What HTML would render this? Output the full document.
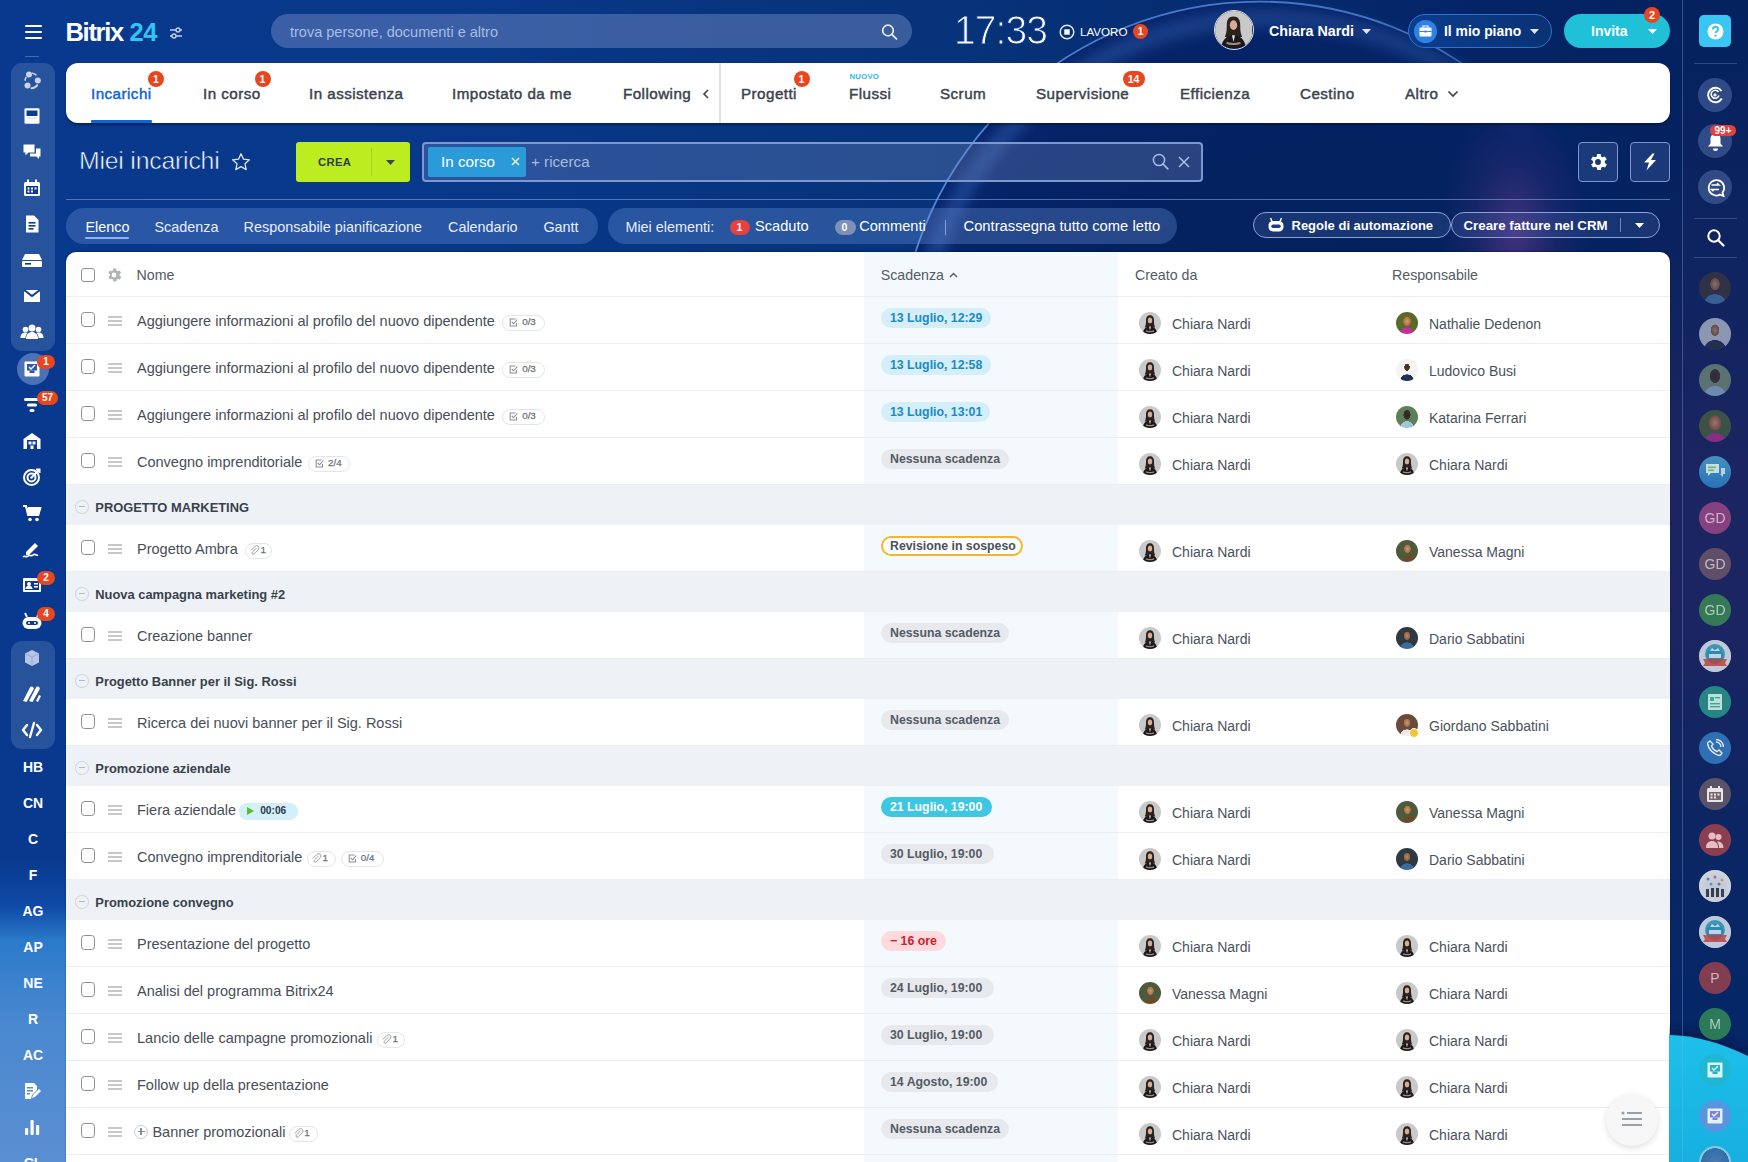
<!DOCTYPE html>
<html><head><meta charset="utf-8">
<style>
*{box-sizing:border-box;margin:0;padding:0}
html,body{width:1748px;height:1162px;overflow:hidden}
body{font-family:"Liberation Sans",sans-serif;position:relative;background:#08388a;color:#3f4650}
.a{position:absolute}
.t{position:absolute;white-space:nowrap;line-height:1}
svg{display:block}
/* background */
#bg{left:0;top:0;width:1748px;height:1162px;overflow:hidden;
 background:linear-gradient(90deg,#08398c 0%,#08388a 25%,#073580 42%,#063379 55%,#052c70 70%,#042466 85%,#04215c 100%)}
#arc{left:897px;top:0.6px;width:725px;height:725px;border-radius:50%;
 background:radial-gradient(circle farthest-side at 62% 60%, #04205e 0%, #04225f 60%, #05246a 100%)}
#glow{left:1440px;top:90px;width:150px;height:260px;border-radius:50%;
 background:radial-gradient(ellipse 50% 50% at 50% 55%, rgba(150,70,165,.42), rgba(120,60,150,.15) 55%, rgba(150,70,160,0) 100%)}
/* left sidebar */
#lsb{left:0;top:0;width:66px;height:1162px;
 background:linear-gradient(180deg,#08398e 0%,#08398e 74%,#0f4aa8 78%,#2a7bc9 81%,#4a88d0 88%,#5a8fd1 100%)}
.lgrp{position:absolute;left:11px;width:44px;border-radius:11px;background:rgba(255,255,255,.13)}
.li{position:absolute;left:23px;width:20px;height:20px}
.ltxt{position:absolute;left:0;width:66px;text-align:center;color:#fff;font-weight:bold;font-size:14px;line-height:1}
.badge{position:absolute;background:#e8461e;color:#fff;font-weight:bold;font-size:10px;line-height:15px;height:15px;min-width:15px;border-radius:8px;text-align:center;padding:0 4px}
/* header */
#search{left:271px;top:14px;width:641px;height:34px;border-radius:17px;background:rgba(150,165,215,.36)}
/* right sidebar */
#rsb{left:1682px;top:0;width:66px;height:1162px;background:linear-gradient(180deg,#04225e 0%,#0d2460 20%,#1a2561 40%,#1a2561 55%,#0d2663 70%,#062766 85%,#062766 100%)}
.rc{position:absolute;left:16px;width:34px;height:34px;border-radius:50%;background:rgba(120,150,210,.35)}
.rav{position:absolute;left:17px;width:32px;height:32px;border-radius:50%;opacity:.66}
.rsep{position:absolute;left:12px;width:43px;height:1px;background:rgba(140,170,230,.3)}
</style></head><body>
<div id="bg" class="a">
 <div id="arc" class="a"></div>
 <svg class="a" style="left:0;top:0" width="1748" height="760" viewBox="0 0 1748 760"><defs><linearGradient id="rimg" gradientUnits="userSpaceOnUse" x1="897" y1="0" x2="1622" y2="0"><stop offset="0" stop-color="#6aa8ff" stop-opacity=".75"/><stop offset=".75" stop-color="#6aa8ff" stop-opacity=".55"/><stop offset=".88" stop-color="#6aa8ff" stop-opacity="0"/></linearGradient><filter id="rb" x="-10%" y="-10%" width="120%" height="120%"><feGaussianBlur stdDeviation="7"/></filter></defs><circle cx="1267" cy="370" r="352" fill="none" stroke="url(#rimg)" stroke-width="16" opacity=".35" filter="url(#rb)"/><circle cx="1259.5" cy="363.1" r="361.5" fill="none" stroke="url(#rimg)" stroke-width="1.8"/></svg>
 <div id="glow" class="a"></div>
 <div class="a" style="left:1640px;top:0;width:60px;height:1162px;background:linear-gradient(180deg,rgba(4,34,94,0) 0%,rgba(26,37,97,0) 15%,#1a2561 38%,#1a2561 55%,#0b2663 72%,#062766 85%)"></div>
</div>

<!-- LEFT SIDEBAR -->
<div id="lsb" class="a">
<div class="a" style="left:25px;top:25px;width:17px;height:14px"><div class="a" style="left:0;top:0;width:17px;height:2.2px;background:#fff;border-radius:1px"></div><div class="a" style="left:0;top:6px;width:17px;height:2.2px;background:#fff;border-radius:1px"></div><div class="a" style="left:0;top:12px;width:17px;height:2.2px;background:#fff;border-radius:1px"></div></div>
<div class="a" style="left:25px;top:56px;width:14px;height:1px;background:rgba(255,255,255,.25)"></div>
<div class="lgrp" style="top:63px;height:288px"></div>
<div class="lgrp" style="top:641px;height:108px"></div>
<div class="a" style="left:17px;top:353px;width:32px;height:32px;border-radius:50%;background:rgba(160,185,230,.45)"></div>
<div class="a" style="left:20.8px;top:69.0px"><svg width="22" height="22" viewBox="0 0 22 22"><circle cx="8" cy="5.5" r="3" fill="#c9d3ea"/><circle cx="16.8" cy="11.5" r="3" fill="#c9d3ea"/><circle cx="6.5" cy="16.5" r="3" fill="#c9d3ea"/><path d="M10.5 19.2c2.5 0 4.5-1.2 5.8-3" stroke="#c9d3ea" stroke-width="2" fill="none" stroke-linecap="round"/><path d="M4.2 11.2c0-1 .3-2 .8-2.8" stroke="#c9d3ea" stroke-width="1.6" fill="none" stroke-linecap="round"/><path d="M11.5 4.2c1.3.2 2.5.8 3.4 1.7" stroke="#c9d3ea" stroke-width="1.6" fill="none" stroke-linecap="round"/></svg></div>
<div class="a" style="left:21.8px;top:106.0px"><svg width="20" height="20" viewBox="0 0 20 20"><rect x="2.5" y="2.2" width="15" height="15.5" rx="1.2" fill="#fff"/><rect x="4.5" y="4.5" width="11" height="5.5" fill="#0b3a90"/><rect x="4.5" y="11.5" width="11" height="1" fill="#c9d3ea"/></svg></div>
<div class="a" style="left:21.8px;top:142.0px"><svg width="20" height="20" viewBox="0 0 20 20"><path d="M1.5 2.5h11v8h-6l-3 3v-3h-2z" fill="#fff"/><path d="M8 11.5h6v-5h4.5v8h-1.5v2.5l-2.5-2.5H8z" fill="#fff"/></svg></div>
<div class="a" style="left:21.8px;top:178.0px"><svg width="20" height="20" viewBox="0 0 20 20"><rect x="2" y="4" width="16" height="14" rx="1.5" fill="#fff"/><rect x="5" y="1.5" width="2" height="4" fill="#fff"/><rect x="13" y="1.5" width="2" height="4" fill="#fff"/><rect x="4" y="8" width="12" height="8" fill="#0b3a90"/><g fill="#fff"><rect x="5.5" y="9.5" width="2" height="2"/><rect x="9" y="9.5" width="2" height="2"/><rect x="12.5" y="9.5" width="2" height="2"/><rect x="5.5" y="12.5" width="2" height="2"/><rect x="9" y="12.5" width="2" height="2"/></g></svg></div>
<div class="a" style="left:21.8px;top:214.0px"><svg width="20" height="20" viewBox="0 0 20 20"><path d="M4 1.5h8l4.5 4.5v12.5H4z" fill="#fff"/><g fill="#0b3a90"><rect x="6.5" y="8" width="7" height="1.6"/><rect x="6.5" y="11" width="7" height="1.6"/><rect x="6.5" y="14" width="5" height="1.6"/></g></svg></div>
<div class="a" style="left:20.8px;top:250.0px"><svg width="22" height="20" viewBox="0 0 22 20"><path d="M4 4h14l3 6H1z" fill="#fff"/><rect x="1" y="11" width="20" height="6" rx="1" fill="#fff"/><rect x="4" y="13" width="6" height="1.6" fill="#0b3a90"/></svg></div>
<div class="a" style="left:21.8px;top:286.0px"><svg width="20" height="20" viewBox="0 0 20 20"><rect x="2" y="4" width="16" height="12" fill="#fff"/><path d="M2 4l8 6 8-6" stroke="#0b3a90" stroke-width="1.8" fill="none"/></svg></div>
<div class="a" style="left:19.8px;top:322.0px"><svg width="24" height="20" viewBox="0 0 24 20"><circle cx="12" cy="6" r="3.5" fill="#fff"/><circle cx="5.5" cy="7.5" r="2.8" fill="#fff"/><circle cx="18.5" cy="7.5" r="2.8" fill="#fff"/><path d="M6 17c0-5 3-7 6-7s6 2 6 7z" fill="#fff"/><path d="M0.5 16c0-4 2-5.5 5-5.5 1 0 2 .3 2 .5-1.5 1.5-2 3-2 5z" fill="#fff"/><path d="M23.5 16c0-4-2-5.5-5-5.5-1 0-2 .3-2 .5 1.5 1.5 2 3 2 5z" fill="#fff"/></svg></div>
<div class="a" style="left:23.8px;top:361.0px"><svg width="16" height="16" viewBox="0 0 16 16"><rect x="0.5" y="0.5" width="15" height="15" rx="1" fill="#fff"/><rect x="3" y="3" width="10" height="6.5" fill="#3357a8"/><rect x="5.5" y="9.5" width="5" height="2.5" fill="#3357a8"/><path d="M5 6l2 2 4-4" stroke="#fff" stroke-width="1.5" fill="none"/></svg></div>
<div class="a" style="left:22.8px;top:397.0px"><svg width="18" height="16" viewBox="0 0 18 16"><rect x="1" y="1" width="16" height="3" rx="1.5" fill="#fff"/><rect x="4" y="6.5" width="10" height="3" rx="1.5" fill="#fff"/><rect x="6.5" y="12" width="5" height="3" rx="1.5" fill="#fff"/></svg></div>
<div class="a" style="left:21.8px;top:431.0px"><svg width="20" height="20" viewBox="0 0 20 20"><path d="M1.5 8L10 2l8.5 6v10h-17z" fill="#fff"/><rect x="5" y="9" width="10" height="9" fill="#0b3a90"/><rect x="6.5" y="10.5" width="3" height="3" fill="#fff"/><rect x="10.5" y="10.5" width="3" height="3" fill="#fff"/><rect x="8.5" y="14.5" width="3" height="3.5" fill="#fff"/></svg></div>
<div class="a" style="left:21.8px;top:467.0px"><svg width="20" height="20" viewBox="0 0 20 20"><circle cx="9.5" cy="10.5" r="7.5" stroke="#fff" stroke-width="2" fill="none"/><circle cx="9.5" cy="10.5" r="4" stroke="#fff" stroke-width="2" fill="none"/><circle cx="9.5" cy="10.5" r="1.3" fill="#fff"/><path d="M10 10l7-7M14 2.5h3.5V6" stroke="#fff" stroke-width="2" fill="none"/></svg></div>
<div class="a" style="left:21.8px;top:503.0px"><svg width="20" height="20" viewBox="0 0 20 20"><path d="M1 3h3l2.2 9h10l2-7H6" stroke="#fff" stroke-width="2.2" fill="none"/><path d="M5 5h14l-2.5 8h-10z" fill="#fff"/><circle cx="8" cy="16.5" r="1.8" fill="#fff"/><circle cx="15" cy="16.5" r="1.8" fill="#fff"/></svg></div>
<div class="a" style="left:21.8px;top:539.0px"><svg width="20" height="20" viewBox="0 0 20 20"><path d="M4 13l9-9 3 3-9 9H4z" fill="#fff"/><path d="M1 18c2-2 3 1 5-1s3 1 5-1 3 1 5 0" stroke="#fff" stroke-width="1.6" fill="none"/></svg></div>
<div class="a" style="left:21.8px;top:576.0px"><svg width="20" height="18" viewBox="0 0 20 18"><rect x="1" y="2" width="18" height="14" rx="1" fill="#fff"/><rect x="3" y="5" width="14" height="9" fill="#0b3a90"/><circle cx="7" cy="8" r="2" fill="#fff"/><path d="M3.5 13c0-2.5 1.5-3 3.5-3s3.5.5 3.5 3z" fill="#fff"/><rect x="12" y="7" width="4" height="1.5" fill="#fff"/><rect x="12" y="10" width="4" height="1.5" fill="#fff"/></svg></div>
<div class="a" style="left:20.8px;top:611.0px"><svg width="22" height="20" viewBox="0 0 22 20"><path d="M6 6L4 2M16 6l2-4" stroke="#fff" stroke-width="1.8"/><rect x="1.5" y="6" width="19" height="12" rx="6" fill="#fff"/><rect x="5" y="10" width="12" height="4" rx="2" fill="#0b3a90"/><circle cx="8" cy="12" r="1" fill="#fff"/><circle cx="14" cy="12" r="1" fill="#fff"/></svg></div>
<div class="a" style="left:21.8px;top:648.0px"><svg width="20" height="20" viewBox="0 0 20 20"><path d="M10 2l7 3.5v9L10 18l-7-3.5v-9z" fill="#b8c6e6"/><path d="M3 5.5L10 9l7-3.5M10 9v9" stroke="#95a8d6" stroke-width="1" fill="none"/></svg></div>
<div class="a" style="left:21.8px;top:684.0px"><svg width="20" height="20" viewBox="0 0 20 20"><path d="M1 17L8 3.5a2 2 0 0 1 3.5 2L4.5 18z" fill="#fff"/><path d="M7 17l7-13.5a2 2 0 0 1 3.5 2L10.5 18z" fill="#fff"/><path d="M14 17l3-6 2 1-3 6z" fill="#fff"/></svg></div>
<div class="a" style="left:20.8px;top:721.0px"><svg width="22" height="18" viewBox="0 0 22 18"><path d="M6 4L2 9l4 5M16 4l4 5-4 5M13 2L9 16" stroke="#fff" stroke-width="2.4" fill="none" stroke-linecap="round"/></svg></div>
<div class="a" style="left:21.8px;top:1081.0px"><svg width="20" height="20" viewBox="0 0 20 20"><path d="M3 2h9l3 3v4l-5 5-1 4H3z" fill="#fff"/><g fill="#5a8ad0"><rect x="5" y="6" width="6" height="1.5"/><rect x="5" y="9" width="6" height="1.5"/><rect x="5" y="12" width="3" height="1.5"/></g><path d="M10 17l1-3 6-6 2 2-6 6z" fill="#fff"/></svg></div>
<div class="a" style="left:21.8px;top:1117.0px"><svg width="20" height="20" viewBox="0 0 20 20"><rect x="3" y="11" width="3.2" height="7" rx="1" fill="#fff"/><rect x="8.5" y="3" width="3.2" height="15" rx="1" fill="#fff"/><rect x="14" y="8" width="3.2" height="10" rx="1" fill="#fff"/></svg></div>
<div class="ltxt" style="top:760px">HB</div>
<div class="ltxt" style="top:796px">CN</div>
<div class="ltxt" style="top:832px">C</div>
<div class="ltxt" style="top:868px">F</div>
<div class="ltxt" style="top:904px">AG</div>
<div class="ltxt" style="top:940px">AP</div>
<div class="ltxt" style="top:976px">NE</div>
<div class="ltxt" style="top:1012px">R</div>
<div class="ltxt" style="top:1048px">AC</div>
<div class="ltxt" style="top:1156px">CL</div>
<div class="badge" style="left:37.0px;top:354.5px;width:18px;height:14px;line-height:14px;border-radius:7px;padding:0">1</div>
<div class="badge" style="left:37.0px;top:390.5px;width:21px;height:14px;line-height:14px;border-radius:7px;padding:0">57</div>
<div class="badge" style="left:37.0px;top:570.5px;width:18px;height:14px;line-height:14px;border-radius:7px;padding:0">2</div>
<div class="badge" style="left:37.0px;top:606.5px;width:18px;height:14px;line-height:14px;border-radius:7px;padding:0">4</div>
</div>

<!-- HEADER -->
<div class="t" style="left:65.5px;top:19.8px;font-size:25.5px;font-weight:bold;color:#fff;letter-spacing:-1.3px">Bitrix</div>
<div class="t" style="left:129.5px;top:19.8px;font-size:25.5px;font-weight:bold;color:#2fc6f6;letter-spacing:-0.5px">24</div>
<svg class="a" style="left:169px;top:27px" width="14" height="12" viewBox="0 0 14 12"><path d="M1 3h12M1 9h12" stroke="#c3cfe8" stroke-width="1.4"/><circle cx="9" cy="3" r="2" fill="#0b3a90" stroke="#c3cfe8" stroke-width="1.4"/><circle cx="5" cy="9" r="2" fill="#0b3a90" stroke="#c3cfe8" stroke-width="1.4"/></svg>
<div id="search" class="a"></div>
<div class="t" style="left:290px;top:24.8px;font-size:14.5px;color:#a9bde3">trova persone, documenti e altro</div>
<svg class="a" style="left:881px;top:24px" width="17" height="16" viewBox="0 0 17 16"><circle cx="7" cy="6.5" r="5.3" stroke="#e6ecf7" stroke-width="1.7" fill="none"/><path d="M10.8 10.3l4.6 4.6" stroke="#e6ecf7" stroke-width="1.9" stroke-linecap="round"/></svg>
<div class="t" style="left:954px;top:9.8px;font-size:40.5px;color:#fff;letter-spacing:-1px;transform:scaleX(0.965);transform-origin:0 0;-webkit-text-stroke:1.1px #0a378c">17:33</div>
<svg class="a" style="left:1059px;top:24px" width="16" height="16" viewBox="0 0 16 16"><circle cx="8" cy="8" r="6.8" stroke="#dfe7f5" stroke-width="1.5" fill="none"/><rect x="5.3" y="5.3" width="5.4" height="5.4" fill="#fff"/></svg>
<div class="t" style="left:1080px;top:26px;font-size:11.6px;color:#fff">LAVORO</div>
<div class="badge" style="left:1133px;top:24px;width:15px;height:15px;line-height:15px;padding:0">1</div>
<div class="a" style="left:1214px;top:10px;width:40px;height:40px;border-radius:50%;overflow:hidden;border:1.5px solid #e1e1e1"><svg width="37" height="37" viewBox="0 0 22 22"><use href="#chi"/></svg></div>
<div class="t" style="left:1269px;top:24px;font-size:14.3px;font-weight:bold;color:#fff">Chiara Nardi</div>
<svg class="a" style="left:1362px;top:29px" width="9" height="5" viewBox="0 0 9 5"><path d="M0 0h9L4.5 5z" fill="#dfe6f3"/></svg>
<div class="a" style="left:1408px;top:14px;width:144px;height:34px;border-radius:17px;border:1.5px solid #2a74cf;background:linear-gradient(90deg,#0b3d8e,#0a3274)"></div>
<div class="a" style="left:1414px;top:19.5px;width:23px;height:23px;border-radius:50%;background:#2e82e6"></div>
<svg class="a" style="left:1419px;top:25px" width="13" height="12" viewBox="0 0 13 12"><rect x="0.5" y="2.5" width="12" height="9" rx="1" fill="#fff"/><path d="M4 2.5V1h5v1.5" stroke="#fff" stroke-width="1.2" fill="none"/><rect x="0.5" y="6" width="12" height="1" fill="#2e82e6"/><rect x="5.5" y="5.5" width="2" height="2" fill="#2e82e6"/></svg>
<div class="t" style="left:1444px;top:25px;font-size:13.9px;font-weight:bold;color:#fff">Il mio piano</div>
<svg class="a" style="left:1530px;top:29px" width="9" height="5" viewBox="0 0 9 5"><path d="M0 0h9L4.5 5z" fill="#dfe6f3"/></svg>
<div class="a" style="left:1564px;top:14px;width:106px;height:34px;border-radius:17px;background:#1fc0d8"></div>
<div class="t" style="left:1591px;top:24px;font-size:14px;font-weight:bold;color:#fff">Invita</div>
<svg class="a" style="left:1648px;top:29px" width="9" height="5" viewBox="0 0 9 5"><path d="M0 0h9L4.5 5z" fill="#fff"/></svg>
<div class="badge" style="left:1644px;top:7px;width:16px;height:16px;line-height:16px;padding:0;border-radius:8px;font-size:11px">2</div>


<!-- TABS/TOOLBAR -->
<div class="a" style="left:66px;top:63px;width:1604px;height:60px;background:#fff;border-radius:12px;box-shadow:0 1.5px 2px rgba(0,10,40,.45)"></div>
<div class="t" style="left:91px;top:86.1px;font-size:15.2px;color:#1065d6;letter-spacing:0.45px;-webkit-text-stroke:0.45px #1065d6">Incarichi</div>
<div class="t" style="left:203px;top:86.1px;font-size:15.2px;color:#3b434d;letter-spacing:0.45px;-webkit-text-stroke:0.45px #3b434d">In corso</div>
<div class="t" style="left:309px;top:86.1px;font-size:15.2px;color:#3b434d;letter-spacing:0.45px;-webkit-text-stroke:0.45px #3b434d">In assistenza</div>
<div class="t" style="left:452px;top:86.1px;font-size:15.2px;color:#3b434d;letter-spacing:0.45px;-webkit-text-stroke:0.45px #3b434d">Impostato da me</div>
<div class="t" style="left:623px;top:86.1px;font-size:15.2px;color:#3b434d;letter-spacing:0.45px;-webkit-text-stroke:0.45px #3b434d">Following</div>
<div class="t" style="left:741px;top:86.1px;font-size:15.2px;color:#3b434d;letter-spacing:0.45px;-webkit-text-stroke:0.45px #3b434d">Progetti</div>
<div class="t" style="left:849px;top:86.1px;font-size:15.2px;color:#3b434d;letter-spacing:0.45px;-webkit-text-stroke:0.45px #3b434d">Flussi</div>
<div class="t" style="left:940px;top:86.1px;font-size:15.2px;color:#3b434d;letter-spacing:0.45px;-webkit-text-stroke:0.45px #3b434d">Scrum</div>
<div class="t" style="left:1036px;top:86.1px;font-size:15.2px;color:#3b434d;letter-spacing:0.45px;-webkit-text-stroke:0.45px #3b434d">Supervisione</div>
<div class="t" style="left:1180px;top:86.1px;font-size:15.2px;color:#3b434d;letter-spacing:0.45px;-webkit-text-stroke:0.45px #3b434d">Efficienza</div>
<div class="t" style="left:1300px;top:86.1px;font-size:15.2px;color:#3b434d;letter-spacing:0.45px;-webkit-text-stroke:0.45px #3b434d">Cestino</div>
<div class="t" style="left:1405px;top:86.1px;font-size:15.2px;color:#3b434d;letter-spacing:0.45px;-webkit-text-stroke:0.45px #3b434d">Altro</div>
<div class="a" style="left:91px;top:120px;width:61px;height:3px;background:#1065d6;border-radius:1px"></div>
<svg class="a" style="left:702px;top:89px" width="8" height="10" viewBox="0 0 8 10"><path d="M6 1L2 5l4 4" stroke="#3b434d" stroke-width="1.6" fill="none"/></svg>
<div class="a" style="left:719px;top:63px;width:2px;height:60px;background:#dfe1e5"></div>
<div class="t" style="left:849.5px;top:73.2px;font-size:7.8px;font-weight:bold;color:#2fb6e9;letter-spacing:0.2px">NUOVO</div>
<svg class="a" style="left:1447px;top:90px" width="12" height="8" viewBox="0 0 12 8"><path d="M1.5 1.5L6 6l4.5-4.5" stroke="#3b434d" stroke-width="1.7" fill="none"/></svg>
<div class="badge" style="left:147.8px;top:71.3px;width:16px;height:16px;line-height:16px;border-radius:8.0px;padding:0;font-size:10.5px">1</div>
<div class="badge" style="left:254.5px;top:71.3px;width:16px;height:16px;line-height:16px;border-radius:8.0px;padding:0;font-size:10.5px">1</div>
<div class="badge" style="left:793.5px;top:71.3px;width:16px;height:16px;line-height:16px;border-radius:8.0px;padding:0;font-size:10.5px">1</div>
<div class="badge" style="left:1122.5px;top:71.3px;width:22px;height:16px;line-height:16px;border-radius:8.0px;padding:0;font-size:10.5px">14</div>
<div class="t" style="left:79px;top:148.6px;font-size:24.8px;color:#fff;letter-spacing:-0.2px;-webkit-text-stroke:0.6px #0a378c">Miei incarichi</div>
<svg class="a" style="left:231px;top:152px" width="20" height="20" viewBox="0 0 20 20"><path d="M10 1.8l2.5 5.4 5.9.6-4.4 4 1.2 5.8L10 14.6l-5.2 3 1.2-5.8-4.4-4 5.9-.6z" stroke="#dfe6f3" stroke-width="1.3" fill="none" stroke-linejoin="round"/></svg>
<div class="a" style="left:296px;top:142px;width:114px;height:40px;background:#bbed21;border-radius:3px"></div>
<div class="a" style="left:370.5px;top:148px;width:1px;height:28px;background:rgba(0,0,0,.12)"></div>
<div class="t" style="left:318px;top:156.8px;font-size:11.3px;font-weight:bold;color:#333c44;letter-spacing:0.3px">CREA</div>
<svg class="a" style="left:385.5px;top:159.5px" width="9" height="5" viewBox="0 0 9 5"><path d="M0 0h9L4.5 5z" fill="#3a4450"/></svg>
<div class="a" style="left:422px;top:142px;width:781px;height:40px;border:2px solid #7d97cf;border-radius:4px;background:rgba(125,145,200,.3)"></div>
<div class="a" style="left:427.5px;top:146.7px;width:98px;height:30.3px;background:#2b9ad9;border-radius:2px"></div>
<div class="t" style="left:441px;top:154.4px;font-size:15.2px;color:#fff;">In corso</div>
<svg class="a" style="left:511px;top:157px" width="9" height="9" viewBox="0 0 9 9"><path d="M1 1l7 7M8 1L1 8" stroke="#dceefa" stroke-width="1.6"/></svg>
<div class="t" style="left:531px;top:154.4px;font-size:15.2px;color:#a9bbdf;">+ ricerca</div>
<svg class="a" style="left:1152px;top:153px" width="17" height="17" viewBox="0 0 17 17"><circle cx="7" cy="7" r="5.6" stroke="#a9bde6" stroke-width="1.5" fill="none"/><path d="M11 11l4.8 4.8" stroke="#a9bde6" stroke-width="1.7" stroke-linecap="round"/></svg>
<svg class="a" style="left:1178px;top:156px" width="12" height="12" viewBox="0 0 12 12"><path d="M1 1l10 10M11 1L1 11" stroke="#a9bde6" stroke-width="1.5"/></svg>
<div class="a" style="left:1578px;top:142px;width:40px;height:40px;border:1.5px solid #7e95cc;border-radius:4px;background:rgba(110,140,210,.22)"></div>
<div class="a" style="left:1630px;top:142px;width:40px;height:40px;border:1.5px solid #7e95cc;border-radius:4px;background:rgba(110,140,210,.22)"></div>
<svg class="a" style="left:1586.5px;top:150.5px" width="22" height="22" viewBox="0 0 24 24"><path fill="#fff" d="M19.4 13a7.5 7.5 0 0 0 0-2l2.1-1.6-2-3.5-2.5 1a7 7 0 0 0-1.7-1L15 3.2h-4l-.4 2.7a7 7 0 0 0-1.7 1l-2.5-1-2 3.5L6.6 11a7.5 7.5 0 0 0 0 2l-2.1 1.6 2 3.5 2.5-1a7 7 0 0 0 1.7 1l.4 2.7h4l.4-2.7a7 7 0 0 0 1.7-1l2.5 1 2-3.5zM12 15.2a3.2 3.2 0 1 1 0-6.4 3.2 3.2 0 0 1 0 6.4z"/></svg>
<svg class="a" style="left:1643px;top:153px" width="14" height="18" viewBox="0 0 14 18"><path d="M9.5 0.5L1 9.5h5L3.5 17.5 13 7H8l3.5-6.5z" fill="#fff"/></svg>
<div class="a" style="left:66px;top:199px;width:1604px;height:1px;background:rgba(130,160,225,.6)"></div>
<div class="a" style="left:66px;top:208px;width:532px;height:36px;border-radius:18px;background:rgba(120,160,230,.3)"></div>
<div class="t" style="left:85.4px;top:219.5px;font-size:14.4px;color:#fff;">Elenco</div>
<div class="t" style="left:154.4px;top:219.5px;font-size:14.4px;color:#e8eef9;">Scadenza</div>
<div class="t" style="left:243.6px;top:219.5px;font-size:14.4px;color:#e8eef9;">Responsabile pianificazione</div>
<div class="t" style="left:448px;top:219.5px;font-size:14.4px;color:#e8eef9;">Calendario</div>
<div class="t" style="left:543.4px;top:219.5px;font-size:14.4px;color:#e8eef9;">Gantt</div>
<div class="a" style="left:85px;top:236.8px;width:44px;height:2px;background:#8fb4ee;border-radius:1px"></div>
<div class="a" style="left:608px;top:208px;width:569px;height:36px;border-radius:18px;background:rgba(120,160,230,.3)"></div>
<div class="t" style="left:625.4px;top:219.5px;font-size:14.4px;color:#e8eef9;">Miei elementi:</div>
<div class="a" style="left:730px;top:219.5px;width:20px;height:15.5px;border-radius:8px;background:#e4413f"></div>
<div class="t" style="left:736.5px;top:221.8px;font-size:10.5px;font-weight:bold;color:#fff;">1</div>
<div class="t" style="left:755px;top:219.3px;font-size:14.6px;color:#fff;">Scaduto</div>
<div class="a" style="left:834.5px;top:219.5px;width:21px;height:15.5px;border-radius:8px;background:#7f90b6"></div>
<div class="t" style="left:841.5px;top:221.8px;font-size:10.5px;font-weight:bold;color:#fff;">0</div>
<div class="t" style="left:859.2px;top:219.3px;font-size:14.6px;color:#fff;">Commenti</div>
<div class="a" style="left:944.5px;top:220px;width:1px;height:15px;background:rgba(200,215,245,.55)"></div>
<div class="t" style="left:963.5px;top:219.2px;font-size:14.75px;color:#fff;">Contrassegna tutto come letto</div>
<div class="a" style="left:1252.5px;top:212px;width:198px;height:26px;border-radius:13px;border:1px solid #8aa2d8;background:rgba(110,140,210,.18)"></div>
<svg class="a" style="left:1267.5px;top:216.5px" width="16" height="15" viewBox="0 0 16 15"><path d="M4 4.5L2.5 1M12 4.5l1.5-3.5" stroke="#fff" stroke-width="1.5"/><rect x="0.5" y="4" width="15" height="10.5" rx="4.5" fill="#fff"/><rect x="3.3" y="7.5" width="9.4" height="3.5" rx="1.7" fill="#1e3d8c"/></svg>
<div class="t" style="left:1291.5px;top:219.2px;font-size:13px;font-weight:bold;color:#fff;">Regole di automazione</div>
<div class="a" style="left:1451px;top:212px;width:209px;height:26px;border-radius:13px;border:1px solid #8aa2d8;background:rgba(110,140,210,.18)"></div>
<div class="t" style="left:1463.5px;top:218.9px;font-size:13.3px;font-weight:bold;color:#fff;">Creare fatture nel CRM</div>
<div class="a" style="left:1620px;top:218px;width:1px;height:14px;background:rgba(200,215,245,.5)"></div>
<svg class="a" style="left:1634.5px;top:223px" width="9" height="5" viewBox="0 0 9 5"><path d="M0 0h9L4.5 5z" fill="#fff"/></svg>
<!-- TABLE -->
<svg width="0" height="0" style="position:absolute"><defs><symbol id="chi" viewBox="0 0 22 22"><rect width="22" height="22" fill="#c9c9c9"/><path d="M11 3.2c-2.8 0-4 2.1-4 4.8 0 2.3.1 4.8-1.2 7.5h10.4C14.9 12.8 15 10.3 15 8c0-2.7-1.2-4.8-4-4.8z" fill="#2b211d"/><ellipse cx="11" cy="8.4" rx="2.2" ry="2.9" fill="#d6ad94"/><path d="M3.5 23c.3-5 2.8-8.6 7.5-8.6s7.2 3.6 7.5 8.6z" fill="#18181d"/><path d="M10.1 14.4h1.8L11 18.5z" fill="#e6e2de"/><path d="M7 18.3c1.5.9 6.5.9 8 0l.3 1.2c-1.8 1-6.8 1-8.6 0z" fill="#caa58e" opacity=".8"/></symbol></defs></svg>
<div class="a" style="left:66px;top:252px;width:1604px;height:930px;background:#fff;border-radius:10px 10px 0 0;overflow:hidden;box-shadow:0 -1px 2px rgba(0,10,40,.35)"></div>
<div class="a" style="left:864px;top:252px;width:254px;height:45px;background:#f3f9fd"></div>
<div class="a" style="left:66px;top:296px;width:1604px;height:1px;background:#eceef1"></div>
<div class="a" style="left:81px;top:268px;width:14px;height:14px;border:1.5px solid #8c9096;border-radius:3px;background:#fff"></div>
<svg class="a" style="left:105px;top:265.5px" width="18" height="18" viewBox="0 0 24 24"><path fill="#b0b4ba" d="M19.4 13a7.5 7.5 0 0 0 0-2l2.1-1.6-2-3.5-2.5 1a7 7 0 0 0-1.7-1L15 3.2h-4l-.4 2.7a7 7 0 0 0-1.7 1l-2.5-1-2 3.5L6.6 11a7.5 7.5 0 0 0 0 2l-2.1 1.6 2 3.5 2.5-1a7 7 0 0 0 1.7 1l.4 2.7h4l.4-2.7a7 7 0 0 0 1.7-1l2.5 1 2-3.5zM12 15.2a3.2 3.2 0 1 1 0-6.4 3.2 3.2 0 0 1 0 6.4z"/></svg>
<div class="t" style="left:136.5px;top:268.0px;font-size:14.2px;color:#525a64;">Nome</div>
<div class="t" style="left:880.8px;top:268.0px;font-size:14.2px;color:#525a64;">Scadenza</div>
<svg class="a" style="left:948.5px;top:271.5px" width="9" height="6" viewBox="0 0 9 6"><path d="M1 5l3.5-3.5L8 5" stroke="#5a626c" stroke-width="1.5" fill="none"/></svg>
<div class="t" style="left:1135px;top:268.0px;font-size:14.2px;color:#525a64;">Creato da</div>
<div class="t" style="left:1392px;top:268.0px;font-size:14.2px;color:#525a64;">Responsabile</div>
<div class="a" style="left:864px;top:297px;width:254px;height:47px;background:#f3f9fd"></div>
<div class="a" style="left:66px;top:343px;width:1604px;height:1px;background:#eceef1"></div>
<div class="a" style="left:81px;top:312px;width:14px;height:14.5px;border:1.6px solid #8b8d90;border-radius:3.5px;background:#fff"></div>
<div class="a" style="left:108px;top:316px;width:14px;height:2px;background:#c6c8cc"></div><div class="a" style="left:108px;top:320px;width:14px;height:2px;background:#c6c8cc"></div><div class="a" style="left:108px;top:324px;width:14px;height:2px;background:#c6c8cc"></div>
<div class="t" style="left:137px;top:313.7px;font-size:14.5px;color:#474e58;">Aggiungere informazioni al profilo del nuovo dipendente</div>
<div class="a" style="left:502.4px;top:314.5px;width:43px;height:16px;border:1px solid #e3e5e8;border-radius:8px"></div><svg class="a" style="left:508.9px;top:318.0px" width="9" height="9" viewBox="0 0 9 9"><path d="M6.5 1H1.2v7h6.3V5" stroke="#8a9099" stroke-width="1.1" fill="none"/><path d="M2.8 4l1.8 1.8L8.3 1.5" stroke="#8a9099" stroke-width="1.1" fill="none"/></svg><div class="t" style="left:522.1999999999999px;top:317.4px;font-size:9.8px;color:#6a717b;-webkit-text-stroke:0.25px #6a717b">0/3</div>
<div class="a" style="left:881px;top:308px;width:110px;height:19.5px;border-radius:10px;background:#d4effa;"></div><div class="t" style="left:890px;top:311.8px;font-size:12.3px;font-weight:bold;color:#1a8abf;">13 Luglio, 12:29</div>
<div class="a" style="left:1138.5px;top:312px;width:22px;height:22px;border-radius:50%;overflow:hidden"><svg width="22" height="22"><use href="#chi"/></svg></div>
<div class="t" style="left:1172px;top:316.5px;font-size:14px;color:#4a525c;">Chiara Nardi</div>
<div class="a" style="left:1395.5px;top:312px;width:22px;height:22px;border-radius:50%;background:radial-gradient(ellipse 40% 35% at 50% 95%,#c2309c 0%,#c2309c 70%,rgba(0,0,0,0) 74%),radial-gradient(ellipse 26% 32% at 50% 42%,#d89b72 0%,#b06a3c 65%,rgba(0,0,0,0) 70%),#5a6a2a"></div>
<div class="t" style="left:1429px;top:316.5px;font-size:14px;color:#4a525c;">Nathalie Dedenon</div>
<div class="a" style="left:864px;top:344px;width:254px;height:47px;background:#f3f9fd"></div>
<div class="a" style="left:66px;top:390px;width:1604px;height:1px;background:#eceef1"></div>
<div class="a" style="left:81px;top:359px;width:14px;height:14.5px;border:1.6px solid #8b8d90;border-radius:3.5px;background:#fff"></div>
<div class="a" style="left:108px;top:363px;width:14px;height:2px;background:#c6c8cc"></div><div class="a" style="left:108px;top:367px;width:14px;height:2px;background:#c6c8cc"></div><div class="a" style="left:108px;top:371px;width:14px;height:2px;background:#c6c8cc"></div>
<div class="t" style="left:137px;top:360.7px;font-size:14.5px;color:#474e58;">Aggiungere informazioni al profilo del nuovo dipendente</div>
<div class="a" style="left:502.4px;top:361.5px;width:43px;height:16px;border:1px solid #e3e5e8;border-radius:8px"></div><svg class="a" style="left:508.9px;top:365.0px" width="9" height="9" viewBox="0 0 9 9"><path d="M6.5 1H1.2v7h6.3V5" stroke="#8a9099" stroke-width="1.1" fill="none"/><path d="M2.8 4l1.8 1.8L8.3 1.5" stroke="#8a9099" stroke-width="1.1" fill="none"/></svg><div class="t" style="left:522.1999999999999px;top:364.4px;font-size:9.8px;color:#6a717b;-webkit-text-stroke:0.25px #6a717b">0/3</div>
<div class="a" style="left:881px;top:355px;width:110px;height:19.5px;border-radius:10px;background:#d4effa;"></div><div class="t" style="left:890px;top:358.8px;font-size:12.3px;font-weight:bold;color:#1a8abf;">13 Luglio, 12:58</div>
<div class="a" style="left:1138.5px;top:359px;width:22px;height:22px;border-radius:50%;overflow:hidden"><svg width="22" height="22"><use href="#chi"/></svg></div>
<div class="t" style="left:1172px;top:363.5px;font-size:14px;color:#4a525c;">Chiara Nardi</div>
<div class="a" style="left:1395.5px;top:359px;width:22px;height:22px;border-radius:50%;background:radial-gradient(ellipse 42% 36% at 50% 96%,#1f3250 0%,#1f3250 70%,rgba(0,0,0,0) 74%),radial-gradient(ellipse 18% 24% at 50% 38%,#3b2a22 0%,#5a3a2a 65%,rgba(0,0,0,0) 70%),#f4f4f4"></div>
<div class="t" style="left:1429px;top:363.5px;font-size:14px;color:#4a525c;">Ludovico Busi</div>
<div class="a" style="left:864px;top:391px;width:254px;height:47px;background:#f3f9fd"></div>
<div class="a" style="left:66px;top:437px;width:1604px;height:1px;background:#eceef1"></div>
<div class="a" style="left:81px;top:406px;width:14px;height:14.5px;border:1.6px solid #8b8d90;border-radius:3.5px;background:#fff"></div>
<div class="a" style="left:108px;top:410px;width:14px;height:2px;background:#c6c8cc"></div><div class="a" style="left:108px;top:414px;width:14px;height:2px;background:#c6c8cc"></div><div class="a" style="left:108px;top:418px;width:14px;height:2px;background:#c6c8cc"></div>
<div class="t" style="left:137px;top:407.7px;font-size:14.5px;color:#474e58;">Aggiungere informazioni al profilo del nuovo dipendente</div>
<div class="a" style="left:502.4px;top:408.5px;width:43px;height:16px;border:1px solid #e3e5e8;border-radius:8px"></div><svg class="a" style="left:508.9px;top:412.0px" width="9" height="9" viewBox="0 0 9 9"><path d="M6.5 1H1.2v7h6.3V5" stroke="#8a9099" stroke-width="1.1" fill="none"/><path d="M2.8 4l1.8 1.8L8.3 1.5" stroke="#8a9099" stroke-width="1.1" fill="none"/></svg><div class="t" style="left:522.1999999999999px;top:411.4px;font-size:9.8px;color:#6a717b;-webkit-text-stroke:0.25px #6a717b">0/3</div>
<div class="a" style="left:881px;top:402px;width:109px;height:19.5px;border-radius:10px;background:#d4effa;"></div><div class="t" style="left:890px;top:405.8px;font-size:12.3px;font-weight:bold;color:#1a8abf;">13 Luglio, 13:01</div>
<div class="a" style="left:1138.5px;top:406px;width:22px;height:22px;border-radius:50%;overflow:hidden"><svg width="22" height="22"><use href="#chi"/></svg></div>
<div class="t" style="left:1172px;top:410.5px;font-size:14px;color:#4a525c;">Chiara Nardi</div>
<div class="a" style="left:1395.5px;top:406px;width:22px;height:22px;border-radius:50%;background:radial-gradient(ellipse 40% 36% at 50% 95%,#9fc6d8 0%,#9fc6d8 70%,rgba(0,0,0,0) 74%),radial-gradient(ellipse 24% 32% at 50% 40%,#2b2420 0%,#3a302a 65%,rgba(0,0,0,0) 70%),#5f7f5a"></div>
<div class="t" style="left:1429px;top:410.5px;font-size:14px;color:#4a525c;">Katarina Ferrari</div>
<div class="a" style="left:864px;top:438px;width:254px;height:47px;background:#f3f9fd"></div>
<div class="a" style="left:66px;top:484px;width:1604px;height:1px;background:#eceef1"></div>
<div class="a" style="left:81px;top:453px;width:14px;height:14.5px;border:1.6px solid #8b8d90;border-radius:3.5px;background:#fff"></div>
<div class="a" style="left:108px;top:457px;width:14px;height:2px;background:#c6c8cc"></div><div class="a" style="left:108px;top:461px;width:14px;height:2px;background:#c6c8cc"></div><div class="a" style="left:108px;top:465px;width:14px;height:2px;background:#c6c8cc"></div>
<div class="t" style="left:137px;top:454.7px;font-size:14.5px;color:#474e58;">Convegno imprenditoriale</div>
<div class="a" style="left:308.3px;top:455.5px;width:42px;height:16px;border:1px solid #e3e5e8;border-radius:8px"></div><svg class="a" style="left:314.8px;top:459.0px" width="9" height="9" viewBox="0 0 9 9"><path d="M6.5 1H1.2v7h6.3V5" stroke="#8a9099" stroke-width="1.1" fill="none"/><path d="M2.8 4l1.8 1.8L8.3 1.5" stroke="#8a9099" stroke-width="1.1" fill="none"/></svg><div class="t" style="left:328.1px;top:458.4px;font-size:9.8px;color:#6a717b;-webkit-text-stroke:0.25px #6a717b">2/4</div>
<div class="a" style="left:881px;top:449px;width:127.5px;height:19.5px;border-radius:10px;background:#e8e9ec;"></div><div class="t" style="left:890px;top:452.8px;font-size:12.3px;font-weight:bold;color:#535b66;">Nessuna scadenza</div>
<div class="a" style="left:1138.5px;top:453px;width:22px;height:22px;border-radius:50%;overflow:hidden"><svg width="22" height="22"><use href="#chi"/></svg></div>
<div class="t" style="left:1172px;top:457.5px;font-size:14px;color:#4a525c;">Chiara Nardi</div>
<div class="a" style="left:1395.5px;top:453px;width:22px;height:22px;border-radius:50%;overflow:hidden"><svg width="22" height="22"><use href="#chi"/></svg></div>
<div class="t" style="left:1429px;top:457.5px;font-size:14px;color:#4a525c;">Chiara Nardi</div>
<div class="a" style="left:66px;top:485px;width:1604px;height:40px;background:#eef2f6"></div>
<div class="a" style="left:75px;top:500px;width:13.5px;height:13.5px;border:1px solid #cfd4da;border-radius:50%"></div><div class="a" style="left:78.5px;top:506.2px;width:6.5px;height:1.2px;background:#b5bac1"></div>
<div class="t" style="left:95.3px;top:502.1px;font-size:12.9px;font-weight:bold;color:#39414b;">PROGETTO MARKETING</div>
<div class="a" style="left:864px;top:525px;width:254px;height:47px;background:#f3f9fd"></div>
<div class="a" style="left:66px;top:571px;width:1604px;height:1px;background:#eceef1"></div>
<div class="a" style="left:81px;top:540px;width:14px;height:14.5px;border:1.6px solid #8b8d90;border-radius:3.5px;background:#fff"></div>
<div class="a" style="left:108px;top:544px;width:14px;height:2px;background:#c6c8cc"></div><div class="a" style="left:108px;top:548px;width:14px;height:2px;background:#c6c8cc"></div><div class="a" style="left:108px;top:552px;width:14px;height:2px;background:#c6c8cc"></div>
<div class="t" style="left:137px;top:541.7px;font-size:14.5px;color:#474e58;">Progetto Ambra</div>
<div class="a" style="left:245.4px;top:542.5px;width:27px;height:16px;border:1px solid #e3e5e8;border-radius:8px"></div><svg class="a" style="left:249.4px;top:545.0px" width="11" height="11" viewBox="0 0 11 11"><path d="M7.5 3L3.3 7.2a1.2 1.2 0 0 0 1.7 1.7L9.3 4.6a2.3 2.3 0 0 0-3.3-3.3L1.8 5.5" stroke="#9aa0a8" stroke-width="1" fill="none"/></svg><div class="t" style="left:260.6px;top:545.4px;font-size:9.8px;color:#6a717b;-webkit-text-stroke:0.25px #6a717b">1</div>
<div class="a" style="left:881px;top:535.5px;width:141.5px;height:20.5px;border-radius:10px;background:#ffffff;border:2px solid #f1b62e;"></div><div class="t" style="left:890px;top:539.9px;font-size:12.3px;font-weight:bold;color:#49515b;">Revisione in sospeso</div>
<div class="a" style="left:1138.5px;top:540px;width:22px;height:22px;border-radius:50%;overflow:hidden"><svg width="22" height="22"><use href="#chi"/></svg></div>
<div class="t" style="left:1172px;top:544.5px;font-size:14px;color:#4a525c;">Chiara Nardi</div>
<div class="a" style="left:1395.5px;top:540px;width:22px;height:22px;border-radius:50%;background:radial-gradient(ellipse 40% 36% at 60% 95%,#6b4a2a 0%,#6b4a2a 70%,rgba(0,0,0,0) 74%),radial-gradient(ellipse 22% 28% at 52% 40%,#c99a70 0%,#a87048 65%,rgba(0,0,0,0) 70%),#4f5a3a"></div>
<div class="t" style="left:1429px;top:544.5px;font-size:14px;color:#4a525c;">Vanessa Magni</div>
<div class="a" style="left:66px;top:572px;width:1604px;height:40px;background:#eef2f6"></div>
<div class="a" style="left:75px;top:587px;width:13.5px;height:13.5px;border:1px solid #cfd4da;border-radius:50%"></div><div class="a" style="left:78.5px;top:593.2px;width:6.5px;height:1.2px;background:#b5bac1"></div>
<div class="t" style="left:95.3px;top:589.1px;font-size:12.9px;font-weight:bold;color:#39414b;">Nuova campagna marketing #2</div>
<div class="a" style="left:864px;top:612px;width:254px;height:47px;background:#f3f9fd"></div>
<div class="a" style="left:66px;top:658px;width:1604px;height:1px;background:#eceef1"></div>
<div class="a" style="left:81px;top:627px;width:14px;height:14.5px;border:1.6px solid #8b8d90;border-radius:3.5px;background:#fff"></div>
<div class="a" style="left:108px;top:631px;width:14px;height:2px;background:#c6c8cc"></div><div class="a" style="left:108px;top:635px;width:14px;height:2px;background:#c6c8cc"></div><div class="a" style="left:108px;top:639px;width:14px;height:2px;background:#c6c8cc"></div>
<div class="t" style="left:137px;top:628.7px;font-size:14.5px;color:#474e58;">Creazione banner</div>
<div class="a" style="left:881px;top:623px;width:127.5px;height:19.5px;border-radius:10px;background:#e8e9ec;"></div><div class="t" style="left:890px;top:626.8px;font-size:12.3px;font-weight:bold;color:#535b66;">Nessuna scadenza</div>
<div class="a" style="left:1138.5px;top:627px;width:22px;height:22px;border-radius:50%;overflow:hidden"><svg width="22" height="22"><use href="#chi"/></svg></div>
<div class="t" style="left:1172px;top:631.5px;font-size:14px;color:#4a525c;">Chiara Nardi</div>
<div class="a" style="left:1395.5px;top:627px;width:22px;height:22px;border-radius:50%;background:radial-gradient(ellipse 42% 36% at 50% 96%,#3c6aa0 0%,#3c6aa0 70%,rgba(0,0,0,0) 74%),radial-gradient(ellipse 22% 28% at 50% 40%,#c08a68 0%,#8a5a40 65%,rgba(0,0,0,0) 70%),#2f3a40"></div>
<div class="t" style="left:1429px;top:631.5px;font-size:14px;color:#4a525c;">Dario Sabbatini</div>
<div class="a" style="left:66px;top:659px;width:1604px;height:40px;background:#eef2f6"></div>
<div class="a" style="left:75px;top:674px;width:13.5px;height:13.5px;border:1px solid #cfd4da;border-radius:50%"></div><div class="a" style="left:78.5px;top:680.2px;width:6.5px;height:1.2px;background:#b5bac1"></div>
<div class="t" style="left:95.3px;top:676.1px;font-size:12.9px;font-weight:bold;color:#39414b;">Progetto Banner per il Sig. Rossi</div>
<div class="a" style="left:864px;top:699px;width:254px;height:47px;background:#f3f9fd"></div>
<div class="a" style="left:66px;top:745px;width:1604px;height:1px;background:#eceef1"></div>
<div class="a" style="left:81px;top:714px;width:14px;height:14.5px;border:1.6px solid #8b8d90;border-radius:3.5px;background:#fff"></div>
<div class="a" style="left:108px;top:718px;width:14px;height:2px;background:#c6c8cc"></div><div class="a" style="left:108px;top:722px;width:14px;height:2px;background:#c6c8cc"></div><div class="a" style="left:108px;top:726px;width:14px;height:2px;background:#c6c8cc"></div>
<div class="t" style="left:137px;top:715.7px;font-size:14.5px;color:#474e58;">Ricerca dei nuovi banner per il Sig. Rossi</div>
<div class="a" style="left:881px;top:710px;width:127.5px;height:19.5px;border-radius:10px;background:#e8e9ec;"></div><div class="t" style="left:890px;top:713.8px;font-size:12.3px;font-weight:bold;color:#535b66;">Nessuna scadenza</div>
<div class="a" style="left:1138.5px;top:714px;width:22px;height:22px;border-radius:50%;overflow:hidden"><svg width="22" height="22"><use href="#chi"/></svg></div>
<div class="t" style="left:1172px;top:718.5px;font-size:14px;color:#4a525c;">Chiara Nardi</div>
<div class="a" style="left:1395.5px;top:714px;width:22px;height:22px;border-radius:50%;background:radial-gradient(ellipse 42% 36% at 50% 96%,#f0f0f0 0%,#e8e8e8 70%,rgba(0,0,0,0) 74%),radial-gradient(ellipse 22% 28% at 50% 40%,#d09a78 0%,#9a6a48 65%,rgba(0,0,0,0) 70%),#6a4a38"></div><div class="a" style="left:1408.5px;top:728px;width:10px;height:10px;border-radius:50%;background:#f7c531;border:1.5px solid #fff"></div>
<div class="t" style="left:1429px;top:718.5px;font-size:14px;color:#4a525c;">Giordano Sabbatini</div>
<div class="a" style="left:66px;top:746px;width:1604px;height:40px;background:#eef2f6"></div>
<div class="a" style="left:75px;top:761px;width:13.5px;height:13.5px;border:1px solid #cfd4da;border-radius:50%"></div><div class="a" style="left:78.5px;top:767.2px;width:6.5px;height:1.2px;background:#b5bac1"></div>
<div class="t" style="left:95.3px;top:763.1px;font-size:12.9px;font-weight:bold;color:#39414b;">Promozione aziendale</div>
<div class="a" style="left:864px;top:786px;width:254px;height:47px;background:#f3f9fd"></div>
<div class="a" style="left:66px;top:832px;width:1604px;height:1px;background:#eceef1"></div>
<div class="a" style="left:81px;top:801px;width:14px;height:14.5px;border:1.6px solid #8b8d90;border-radius:3.5px;background:#fff"></div>
<div class="a" style="left:108px;top:805px;width:14px;height:2px;background:#c6c8cc"></div><div class="a" style="left:108px;top:809px;width:14px;height:2px;background:#c6c8cc"></div><div class="a" style="left:108px;top:813px;width:14px;height:2px;background:#c6c8cc"></div>
<div class="t" style="left:137px;top:802.7px;font-size:14.5px;color:#474e58;">Fiera aziendale</div>
<div class="a" style="left:239.2px;top:803px;width:59px;height:16.5px;border-radius:8px;background:#d3effa"></div><svg class="a" style="left:247.2px;top:807.3px" width="7" height="8" viewBox="0 0 7 8"><path d="M0 0l7 4-7 4z" fill="#55c21b"/></svg><div class="t" style="left:260.2px;top:806.4px;font-size:10.2px;font-weight:bold;color:#2e3842;">00:06</div>
<div class="a" style="left:881px;top:797px;width:111px;height:19.5px;border-radius:10px;background:#3ec7e3;"></div><div class="t" style="left:890px;top:800.8px;font-size:12.3px;font-weight:bold;color:#ffffff;">21 Luglio, 19:00</div>
<div class="a" style="left:1138.5px;top:801px;width:22px;height:22px;border-radius:50%;overflow:hidden"><svg width="22" height="22"><use href="#chi"/></svg></div>
<div class="t" style="left:1172px;top:805.5px;font-size:14px;color:#4a525c;">Chiara Nardi</div>
<div class="a" style="left:1395.5px;top:801px;width:22px;height:22px;border-radius:50%;background:radial-gradient(ellipse 40% 36% at 60% 95%,#6b4a2a 0%,#6b4a2a 70%,rgba(0,0,0,0) 74%),radial-gradient(ellipse 22% 28% at 52% 40%,#c99a70 0%,#a87048 65%,rgba(0,0,0,0) 70%),#4f5a3a"></div>
<div class="t" style="left:1429px;top:805.5px;font-size:14px;color:#4a525c;">Vanessa Magni</div>
<div class="a" style="left:864px;top:833px;width:254px;height:47px;background:#f3f9fd"></div>
<div class="a" style="left:66px;top:879px;width:1604px;height:1px;background:#eceef1"></div>
<div class="a" style="left:81px;top:848px;width:14px;height:14.5px;border:1.6px solid #8b8d90;border-radius:3.5px;background:#fff"></div>
<div class="a" style="left:108px;top:852px;width:14px;height:2px;background:#c6c8cc"></div><div class="a" style="left:108px;top:856px;width:14px;height:2px;background:#c6c8cc"></div><div class="a" style="left:108px;top:860px;width:14px;height:2px;background:#c6c8cc"></div>
<div class="t" style="left:137px;top:849.7px;font-size:14.5px;color:#474e58;">Convegno imprenditoriale</div>
<div class="a" style="left:307.4px;top:850.5px;width:29px;height:16px;border:1px solid #e3e5e8;border-radius:8px"></div><svg class="a" style="left:311.4px;top:853.0px" width="11" height="11" viewBox="0 0 11 11"><path d="M7.5 3L3.3 7.2a1.2 1.2 0 0 0 1.7 1.7L9.3 4.6a2.3 2.3 0 0 0-3.3-3.3L1.8 5.5" stroke="#9aa0a8" stroke-width="1" fill="none"/></svg><div class="t" style="left:322.59999999999997px;top:853.4px;font-size:9.8px;color:#6a717b;-webkit-text-stroke:0.25px #6a717b">1</div>
<div class="a" style="left:341px;top:850.5px;width:42.5px;height:16px;border:1px solid #e3e5e8;border-radius:8px"></div><svg class="a" style="left:347.5px;top:854.0px" width="9" height="9" viewBox="0 0 9 9"><path d="M6.5 1H1.2v7h6.3V5" stroke="#8a9099" stroke-width="1.1" fill="none"/><path d="M2.8 4l1.8 1.8L8.3 1.5" stroke="#8a9099" stroke-width="1.1" fill="none"/></svg><div class="t" style="left:360.8px;top:853.4px;font-size:9.8px;color:#6a717b;-webkit-text-stroke:0.25px #6a717b">0/4</div>
<div class="a" style="left:881px;top:844px;width:113px;height:19.5px;border-radius:10px;background:#e8e9ec;"></div><div class="t" style="left:890px;top:847.8px;font-size:12.3px;font-weight:bold;color:#535b66;">30 Luglio, 19:00</div>
<div class="a" style="left:1138.5px;top:848px;width:22px;height:22px;border-radius:50%;overflow:hidden"><svg width="22" height="22"><use href="#chi"/></svg></div>
<div class="t" style="left:1172px;top:852.5px;font-size:14px;color:#4a525c;">Chiara Nardi</div>
<div class="a" style="left:1395.5px;top:848px;width:22px;height:22px;border-radius:50%;background:radial-gradient(ellipse 42% 36% at 50% 96%,#3c6aa0 0%,#3c6aa0 70%,rgba(0,0,0,0) 74%),radial-gradient(ellipse 22% 28% at 50% 40%,#c08a68 0%,#8a5a40 65%,rgba(0,0,0,0) 70%),#2f3a40"></div>
<div class="t" style="left:1429px;top:852.5px;font-size:14px;color:#4a525c;">Dario Sabbatini</div>
<div class="a" style="left:66px;top:880px;width:1604px;height:40px;background:#eef2f6"></div>
<div class="a" style="left:75px;top:895px;width:13.5px;height:13.5px;border:1px solid #cfd4da;border-radius:50%"></div><div class="a" style="left:78.5px;top:901.2px;width:6.5px;height:1.2px;background:#b5bac1"></div>
<div class="t" style="left:95.3px;top:897.1px;font-size:12.9px;font-weight:bold;color:#39414b;">Promozione convegno</div>
<div class="a" style="left:864px;top:920px;width:254px;height:47px;background:#f3f9fd"></div>
<div class="a" style="left:66px;top:966px;width:1604px;height:1px;background:#eceef1"></div>
<div class="a" style="left:81px;top:935px;width:14px;height:14.5px;border:1.6px solid #8b8d90;border-radius:3.5px;background:#fff"></div>
<div class="a" style="left:108px;top:939px;width:14px;height:2px;background:#c6c8cc"></div><div class="a" style="left:108px;top:943px;width:14px;height:2px;background:#c6c8cc"></div><div class="a" style="left:108px;top:947px;width:14px;height:2px;background:#c6c8cc"></div>
<div class="t" style="left:137px;top:936.7px;font-size:14.5px;color:#474e58;">Presentazione del progetto</div>
<div class="a" style="left:881px;top:931px;width:65px;height:19.5px;border-radius:10px;background:#ffdadd;"></div><div class="t" style="left:890px;top:934.8px;font-size:12.3px;font-weight:bold;color:#d0202d;">− 16 ore</div>
<div class="a" style="left:1138.5px;top:935px;width:22px;height:22px;border-radius:50%;overflow:hidden"><svg width="22" height="22"><use href="#chi"/></svg></div>
<div class="t" style="left:1172px;top:939.5px;font-size:14px;color:#4a525c;">Chiara Nardi</div>
<div class="a" style="left:1395.5px;top:935px;width:22px;height:22px;border-radius:50%;overflow:hidden"><svg width="22" height="22"><use href="#chi"/></svg></div>
<div class="t" style="left:1429px;top:939.5px;font-size:14px;color:#4a525c;">Chiara Nardi</div>
<div class="a" style="left:864px;top:967px;width:254px;height:47px;background:#f3f9fd"></div>
<div class="a" style="left:66px;top:1013px;width:1604px;height:1px;background:#eceef1"></div>
<div class="a" style="left:81px;top:982px;width:14px;height:14.5px;border:1.6px solid #8b8d90;border-radius:3.5px;background:#fff"></div>
<div class="a" style="left:108px;top:986px;width:14px;height:2px;background:#c6c8cc"></div><div class="a" style="left:108px;top:990px;width:14px;height:2px;background:#c6c8cc"></div><div class="a" style="left:108px;top:994px;width:14px;height:2px;background:#c6c8cc"></div>
<div class="t" style="left:137px;top:983.7px;font-size:14.5px;color:#474e58;">Analisi del programma Bitrix24</div>
<div class="a" style="left:881px;top:978px;width:113px;height:19.5px;border-radius:10px;background:#e8e9ec;"></div><div class="t" style="left:890px;top:981.8px;font-size:12.3px;font-weight:bold;color:#535b66;">24 Luglio, 19:00</div>
<div class="a" style="left:1138.5px;top:982px;width:22px;height:22px;border-radius:50%;background:radial-gradient(ellipse 40% 36% at 60% 95%,#6b4a2a 0%,#6b4a2a 70%,rgba(0,0,0,0) 74%),radial-gradient(ellipse 22% 28% at 52% 40%,#c99a70 0%,#a87048 65%,rgba(0,0,0,0) 70%),#4f5a3a"></div>
<div class="t" style="left:1172px;top:986.5px;font-size:14px;color:#4a525c;">Vanessa Magni</div>
<div class="a" style="left:1395.5px;top:982px;width:22px;height:22px;border-radius:50%;overflow:hidden"><svg width="22" height="22"><use href="#chi"/></svg></div>
<div class="t" style="left:1429px;top:986.5px;font-size:14px;color:#4a525c;">Chiara Nardi</div>
<div class="a" style="left:864px;top:1014px;width:254px;height:47px;background:#f3f9fd"></div>
<div class="a" style="left:66px;top:1060px;width:1604px;height:1px;background:#eceef1"></div>
<div class="a" style="left:81px;top:1029px;width:14px;height:14.5px;border:1.6px solid #8b8d90;border-radius:3.5px;background:#fff"></div>
<div class="a" style="left:108px;top:1033px;width:14px;height:2px;background:#c6c8cc"></div><div class="a" style="left:108px;top:1037px;width:14px;height:2px;background:#c6c8cc"></div><div class="a" style="left:108px;top:1041px;width:14px;height:2px;background:#c6c8cc"></div>
<div class="t" style="left:137px;top:1030.7px;font-size:14.5px;color:#474e58;">Lancio delle campagne promozionali</div>
<div class="a" style="left:377.3px;top:1031.5px;width:28px;height:16px;border:1px solid #e3e5e8;border-radius:8px"></div><svg class="a" style="left:381.3px;top:1034.0px" width="11" height="11" viewBox="0 0 11 11"><path d="M7.5 3L3.3 7.2a1.2 1.2 0 0 0 1.7 1.7L9.3 4.6a2.3 2.3 0 0 0-3.3-3.3L1.8 5.5" stroke="#9aa0a8" stroke-width="1" fill="none"/></svg><div class="t" style="left:392.5px;top:1034.4px;font-size:9.8px;color:#6a717b;-webkit-text-stroke:0.25px #6a717b">1</div>
<div class="a" style="left:881px;top:1025px;width:113px;height:19.5px;border-radius:10px;background:#e8e9ec;"></div><div class="t" style="left:890px;top:1028.8px;font-size:12.3px;font-weight:bold;color:#535b66;">30 Luglio, 19:00</div>
<div class="a" style="left:1138.5px;top:1029px;width:22px;height:22px;border-radius:50%;overflow:hidden"><svg width="22" height="22"><use href="#chi"/></svg></div>
<div class="t" style="left:1172px;top:1033.5px;font-size:14px;color:#4a525c;">Chiara Nardi</div>
<div class="a" style="left:1395.5px;top:1029px;width:22px;height:22px;border-radius:50%;overflow:hidden"><svg width="22" height="22"><use href="#chi"/></svg></div>
<div class="t" style="left:1429px;top:1033.5px;font-size:14px;color:#4a525c;">Chiara Nardi</div>
<div class="a" style="left:864px;top:1061px;width:254px;height:47px;background:#f3f9fd"></div>
<div class="a" style="left:66px;top:1107px;width:1604px;height:1px;background:#eceef1"></div>
<div class="a" style="left:81px;top:1076px;width:14px;height:14.5px;border:1.6px solid #8b8d90;border-radius:3.5px;background:#fff"></div>
<div class="a" style="left:108px;top:1080px;width:14px;height:2px;background:#c6c8cc"></div><div class="a" style="left:108px;top:1084px;width:14px;height:2px;background:#c6c8cc"></div><div class="a" style="left:108px;top:1088px;width:14px;height:2px;background:#c6c8cc"></div>
<div class="t" style="left:137px;top:1077.7px;font-size:14.5px;color:#474e58;">Follow up della presentazione</div>
<div class="a" style="left:881px;top:1072px;width:116.5px;height:19.5px;border-radius:10px;background:#e8e9ec;"></div><div class="t" style="left:890px;top:1075.8px;font-size:12.3px;font-weight:bold;color:#535b66;">14 Agosto, 19:00</div>
<div class="a" style="left:1138.5px;top:1076px;width:22px;height:22px;border-radius:50%;overflow:hidden"><svg width="22" height="22"><use href="#chi"/></svg></div>
<div class="t" style="left:1172px;top:1080.5px;font-size:14px;color:#4a525c;">Chiara Nardi</div>
<div class="a" style="left:1395.5px;top:1076px;width:22px;height:22px;border-radius:50%;overflow:hidden"><svg width="22" height="22"><use href="#chi"/></svg></div>
<div class="t" style="left:1429px;top:1080.5px;font-size:14px;color:#4a525c;">Chiara Nardi</div>
<div class="a" style="left:864px;top:1108px;width:254px;height:47px;background:#f3f9fd"></div>
<div class="a" style="left:66px;top:1154px;width:1604px;height:1px;background:#eceef1"></div>
<div class="a" style="left:81px;top:1123px;width:14px;height:14.5px;border:1.6px solid #8b8d90;border-radius:3.5px;background:#fff"></div>
<div class="a" style="left:108px;top:1127px;width:14px;height:2px;background:#c6c8cc"></div><div class="a" style="left:108px;top:1131px;width:14px;height:2px;background:#c6c8cc"></div><div class="a" style="left:108px;top:1135px;width:14px;height:2px;background:#c6c8cc"></div>
<div class="a" style="left:134px;top:1124.5px;width:14px;height:14px;border:1px solid #c9cdd2;border-radius:50%"></div><div class="a" style="left:137.5px;top:1130.8px;width:7px;height:1.4px;background:#8a9099"></div><div class="a" style="left:140.3px;top:1128px;width:1.4px;height:7px;background:#8a9099"></div>
<div class="t" style="left:152.4px;top:1124.7px;font-size:14.5px;color:#474e58;">Banner promozionali</div>
<div class="a" style="left:289px;top:1125.5px;width:29px;height:16px;border:1px solid #e3e5e8;border-radius:8px"></div><svg class="a" style="left:293px;top:1128.0px" width="11" height="11" viewBox="0 0 11 11"><path d="M7.5 3L3.3 7.2a1.2 1.2 0 0 0 1.7 1.7L9.3 4.6a2.3 2.3 0 0 0-3.3-3.3L1.8 5.5" stroke="#9aa0a8" stroke-width="1" fill="none"/></svg><div class="t" style="left:304.2px;top:1128.4px;font-size:9.8px;color:#6a717b;-webkit-text-stroke:0.25px #6a717b">1</div>
<div class="a" style="left:881px;top:1119px;width:127.5px;height:19.5px;border-radius:10px;background:#e8e9ec;"></div><div class="t" style="left:890px;top:1122.8px;font-size:12.3px;font-weight:bold;color:#535b66;">Nessuna scadenza</div>
<div class="a" style="left:1138.5px;top:1123px;width:22px;height:22px;border-radius:50%;overflow:hidden"><svg width="22" height="22"><use href="#chi"/></svg></div>
<div class="t" style="left:1172px;top:1127.5px;font-size:14px;color:#4a525c;">Chiara Nardi</div>
<div class="a" style="left:1395.5px;top:1123px;width:22px;height:22px;border-radius:50%;overflow:hidden"><svg width="22" height="22"><use href="#chi"/></svg></div>
<div class="t" style="left:1429px;top:1127.5px;font-size:14px;color:#4a525c;">Chiara Nardi</div>
<div class="a" style="left:864px;top:1155px;width:254px;height:20px;background:#f3f9fd"></div>
<div class="a" style="left:81px;top:1170.5px;width:14px;height:14px;border:1.5px solid #8c9096;border-radius:3px;background:#fff"></div>
<div class="a" style="left:1606px;top:1094px;width:52px;height:52px;border-radius:50%;background:#f7f7f8;box-shadow:0 2px 6px rgba(0,0,0,.13)"></div>
<svg class="a" style="left:1621px;top:1111px" width="22" height="16" viewBox="0 0 22 16"><circle cx="2" cy="2" r="1.6" fill="#9aa0a7"/><rect x="6" y="1" width="15" height="2" fill="#9aa0a7"/><rect x="1" y="7" width="20" height="2" fill="#9aa0a7"/><rect x="1" y="13" width="20" height="2" fill="#9aa0a7"/></svg>
<!-- /TABLE -->
<!-- RIGHT SIDEBAR -->
<div id="rsb" class="a">
<svg class="a" style="left:-13px;top:1000px" width="79" height="162" viewBox="0 0 79 162"><defs><linearGradient id="wv" x1="0" y1="0" x2="0" y2="1"><stop offset="0" stop-color="#1dc0ea"/><stop offset="1" stop-color="#17b0e0"/></linearGradient><filter id="bl" x="-20%" y="-50%" width="140%" height="200%"><feGaussianBlur stdDeviation="5"/></filter></defs><path d="M0 30 C25 30 55 40 79 52 V162 H0z" fill="#071848" filter="url(#bl)" opacity=".8"/><path d="M0 35 C25 35 55 44 79 56 V162 H0z" fill="url(#wv)"/></svg>
<div class="a" style="left:0;top:0;width:1px;height:1162px;background:rgba(140,170,230,.35)"></div>
<div class="a" style="left:17px;top:15px;width:32px;height:32px;border-radius:5px;background:#3ac6f4"></div>
<svg class="a" style="left:24.5px;top:22.5px" width="17" height="17" viewBox="0 0 17 17"><circle cx="8.5" cy="8.5" r="8" fill="#fff"/><path d="M5.9 6.4a2.6 2.6 0 0 1 5.2 0c0 1.6-2.6 1.9-2.6 3.6" stroke="#3ac6f4" stroke-width="1.9" fill="none"/><circle cx="8.5" cy="12.7" r="1.15" fill="#3ac6f4"/></svg>
<div class="rsep" style="top:63px"></div>
<div class="rsep" style="top:218px"></div>
<div class="rsep" style="top:256.5px"></div>
<div class="rc" style="top:77.8px"></div>
<div class="rc" style="top:124px"></div>
<div class="rc" style="top:170px"></div>
<svg class="a" style="left:24px;top:85.8px" width="18" height="18" viewBox="0 0 18 18"><path d="M15.5 5A7.3 7.3 0 1 0 15.8 12.6" stroke="#fff" stroke-width="2" fill="none"/><path d="M13 9.5A4 4 0 1 1 12.5 6" stroke="#fff" stroke-width="1.6" fill="none"/><path d="M9 6.5l.8 1.7 1.7.8-1.7.8L9 11.5l-.8-1.7-1.7-.8 1.7-.8z" fill="#fff"/></svg>
<svg class="a" style="left:24.5px;top:132px" width="17" height="19" viewBox="0 0 17 19"><path d="M8.5 1.5a5 5 0 0 1 5 5v5l2.5 3H1l2.5-3v-5a5 5 0 0 1 5-5z" fill="#fff"/><path d="M6 16.5a2.5 2.5 0 0 0 5 0z" fill="#fff"/></svg>
<div class="a" style="left:28px;top:124.6px;width:26px;height:11.5px;border-radius:6px;background:#e1403e;color:#fff;font-weight:bold;font-size:10px;line-height:11.5px;text-align:center">99+</div>
<svg class="a" style="left:24px;top:178px" width="19" height="19" viewBox="0 0 19 19"><path d="M16.5 14.5A7.7 7.7 0 1 0 14 16.6l3.5 1.4z" stroke="#fff" stroke-width="1.8" fill="none"/><path d="M5.5 7h7.5l-2-1.8M13 11.5H5.5l2 1.8" stroke="#fff" stroke-width="1.5" fill="none"/></svg>
<svg class="a" style="left:25px;top:229px" width="18" height="18" viewBox="0 0 18 18"><circle cx="7" cy="7" r="5.7" stroke="#fff" stroke-width="2" fill="none"/><path d="M11.2 11.2l5.3 5.3" stroke="#fff" stroke-width="2.2" stroke-linecap="round"/></svg>
<div class="rav" style="top:272px;background:radial-gradient(ellipse 45% 35% at 50% 95%,#4f7fb0 0%,#4f7fb0 70%,rgba(0,0,0,0) 74%),radial-gradient(ellipse 22% 28% at 50% 38%,#c9956e 0%,#8f6045 65%,rgba(0,0,0,0) 70%),#3f3a38"></div>
<div class="rav" style="top:318px;background:radial-gradient(ellipse 45% 36% at 50% 95%,#2a3548 0%,#2a3548 70%,rgba(0,0,0,0) 74%),radial-gradient(ellipse 20% 26% at 50% 38%,#c39272 0%,#8f6045 65%,rgba(0,0,0,0) 70%),#c9d2dd"></div>
<div class="rav" style="top:364px;background:radial-gradient(ellipse 45% 36% at 50% 95%,#9cc0d8 0%,#9cc0d8 70%,rgba(0,0,0,0) 74%),radial-gradient(ellipse 24% 32% at 50% 38%,#3a2d28 0%,#4a3a30 65%,rgba(0,0,0,0) 70%),#7f9a7a"></div>
<div class="rav" style="top:410px;background:radial-gradient(ellipse 42% 32% at 50% 96%,#c4309a 0%,#c4309a 70%,rgba(0,0,0,0) 74%),radial-gradient(ellipse 28% 34% at 50% 40%,#d8a07a 0%,#a8603a 65%,rgba(0,0,0,0) 70%),#4f6a3a"></div>
<div class="rav" style="top:456px;background:linear-gradient(180deg,#5cc6f0,#2e9be0)"></div>
<div class="rav" style="top:502px;background:#c0508f"></div>
<div class="t" style="left:17px;top:511px;width:32px;text-align:center;font-size:14px;color:#fff;opacity:.6">GD</div>
<div class="rav" style="top:548px;background:#86646e"></div>
<div class="t" style="left:17px;top:557px;width:32px;text-align:center;font-size:14px;color:#fff;opacity:.6">GD</div>
<div class="rav" style="top:594px;background:#46a552"></div>
<div class="t" style="left:17px;top:603px;width:32px;text-align:center;font-size:14px;color:#fff;opacity:.6">GD</div>
<div class="rav" style="top:640px;background:radial-gradient(circle at 50% 50%,#3a8fd0 0%,#3a8fd0 35%,#cfdbe8 38%)"></div>
<div class="rav" style="top:686px;background:#30b898"></div>
<div class="rav" style="top:732px;background:#3f95dc"></div>
<div class="rav" style="top:778px;background:#82686a"></div>
<div class="rav" style="top:824px;background:#cf4a48"></div>
<div class="rav" style="top:870px;background:radial-gradient(circle at 50% 55%,#6a7aa8 0%,#a8b4c8 45%,#e0e6ee 70%)"></div>
<div class="rav" style="top:916px;background:radial-gradient(circle at 50% 50%,#3a8fd0 0%,#3a8fd0 35%,#cfdbe8 38%)"></div>
<div class="rav" style="top:962px;background:#c24a44"></div>
<div class="t" style="left:17px;top:971px;width:32px;text-align:center;font-size:14px;color:#fff;opacity:.6">P</div>
<div class="rav" style="top:1008px;background:#40a653"></div>
<div class="t" style="left:17px;top:1017px;width:32px;text-align:center;font-size:14px;color:#fff;opacity:.6">M</div>
<div class="rav" style="top:1054px;background:#22b5c8"></div>
<div class="rav" style="top:1100px;background:#7a84dc"></div>
<div class="rav" style="top:1146px;background:radial-gradient(circle at 50% 50%,#6a5a9a 0%,#3a4f8a 60%,#bfd0e6 62%)"></div>
<svg class="a" style="left:22px;top:462px;opacity:.8" width="22" height="20" viewBox="0 0 22 20"><path d="M2 2h13v9H7l-3 3v-3H2z" fill="#e8f2f8"/><path d="M9 12h7l3 3v-3h2V6h-4v6" fill="#d6e8f2"/><rect x="4" y="4.5" width="8" height="1.6" fill="#8ac43f"/><rect x="4" y="7.5" width="6" height="1.6" fill="#8ac43f"/></svg>
<svg class="a" style="left:25px;top:693px;opacity:.8" width="16" height="18" viewBox="0 0 16 18"><rect x="1" y="1" width="14" height="16" rx="1" fill="#e8f5f0"/><rect x="3" y="4" width="4" height="4" fill="#30b898"/><rect x="8" y="4" width="5" height="1.4" fill="#30b898"/><rect x="3" y="10" width="10" height="1.4" fill="#30b898"/><rect x="3" y="13" width="10" height="1.4" fill="#30b898"/></svg>
<svg class="a" style="left:24px;top:739px;opacity:.85" width="18" height="18" viewBox="0 0 18 18"><path d="M4 2l3 3-1.5 2a9 9 0 0 0 5.5 5.5l2-1.5 3 3-2 2.5C8 16 2 10 1.5 4z" stroke="#fff" stroke-width="1.4" fill="none"/><path d="M10 3a5 5 0 0 1 5 5M10 0.5a7.5 7.5 0 0 1 7.5 7.5" stroke="#fff" stroke-width="1.3" fill="none"/></svg>
<svg class="a" style="left:24px;top:785px;opacity:.85" width="18" height="18" viewBox="0 0 18 18"><rect x="1" y="3" width="16" height="14" rx="1.5" fill="#fff"/><rect x="4" y="1" width="2" height="4" fill="#fff"/><rect x="12" y="1" width="2" height="4" fill="#fff"/><rect x="3" y="7" width="12" height="8" fill="#82686a"/><g fill="#fff"><rect x="4.5" y="8.5" width="2" height="2"/><rect x="8" y="8.5" width="2" height="2"/><rect x="11.5" y="8.5" width="2" height="2"/><rect x="4.5" y="11.5" width="2" height="2"/><rect x="8" y="11.5" width="2" height="2"/></g></svg>
<svg class="a" style="left:23px;top:831px;opacity:.85" width="20" height="18" viewBox="0 0 20 18"><circle cx="7" cy="5" r="3.5" fill="#f3d6d6"/><circle cx="13.5" cy="6" r="3" fill="#f3d6d6"/><path d="M1 17c0-5 2.5-7 6-7s6 2 6 7z" fill="#f3d6d6"/><path d="M12 10.5c3.5 0 6.5 1.5 6.5 6.5H14c0-3-1-5-2-6.5z" fill="#f3d6d6"/></svg>
<svg class="a" style="left:25px;top:1062px;opacity:.85" width="16" height="16" viewBox="0 0 16 16"><rect x="0.5" y="0.5" width="15" height="15" rx="1" fill="#fff"/><rect x="3" y="3" width="10" height="6.5" fill="#22b5c8"/><rect x="5.5" y="9.5" width="5" height="2.5" fill="#22b5c8"/><path d="M5 6l2 2 4-4" stroke="#fff" stroke-width="1.5" fill="none"/></svg>
<svg class="a" style="left:25px;top:1108px;opacity:.85" width="16" height="16" viewBox="0 0 16 16"><rect x="0.5" y="0.5" width="15" height="15" rx="1" fill="#fff"/><rect x="3" y="3" width="10" height="6.5" fill="#7a84dc"/><rect x="5.5" y="9.5" width="5" height="2.5" fill="#7a84dc"/><path d="M5 6l2 2 4-4" stroke="#fff" stroke-width="1.5" fill="none"/></svg>
<svg class="a" style="left:17px;top:640px;opacity:.78" width="32" height="32" viewBox="0 0 32 32"><circle cx="16" cy="16" r="16" fill="#cdd6e4"/><circle cx="16" cy="14" r="10" fill="#2a94b0"/><path d="M10 14h12v4H10z" fill="#e8f0f8"/><path d="M11 11l2-3 3 2 3-2 2 3z" fill="#e8f0f8"/><path d="M4 19h24l-2 4 2 3H4l2-3z" fill="#c8453c"/></svg>
<svg class="a" style="left:17px;top:916px;opacity:.78" width="32" height="32" viewBox="0 0 32 32"><circle cx="16" cy="16" r="16" fill="#cdd6e4"/><circle cx="16" cy="14" r="10" fill="#2a94b0"/><path d="M10 14h12v4H10z" fill="#e8f0f8"/><path d="M11 11l2-3 3 2 3-2 2 3z" fill="#e8f0f8"/><path d="M4 19h24l-2 4 2 3H4l2-3z" fill="#c8453c"/></svg>
<svg class="a" style="left:17px;top:870px;opacity:.78" width="32" height="32" viewBox="0 0 32 32"><circle cx="16" cy="16" r="16" fill="#dfe3ea"/><g fill="#6a7ab0"><circle cx="9" cy="9" r="1.5"/><circle cx="16" cy="7" r="1.5" fill="#c85a8a"/><circle cx="23" cy="10" r="1.5" fill="#e0a040"/><circle cx="12" cy="14" r="1.5" fill="#50a0d0"/><circle cx="20" cy="14" r="1.5"/></g><g fill="#2a2f3a"><rect x="7" y="19" width="3" height="8"/><rect x="12" y="18" width="3" height="9"/><rect x="17" y="18" width="3" height="9"/><rect x="22" y="19" width="3" height="8"/></g></svg>
</div>

</body></html>
